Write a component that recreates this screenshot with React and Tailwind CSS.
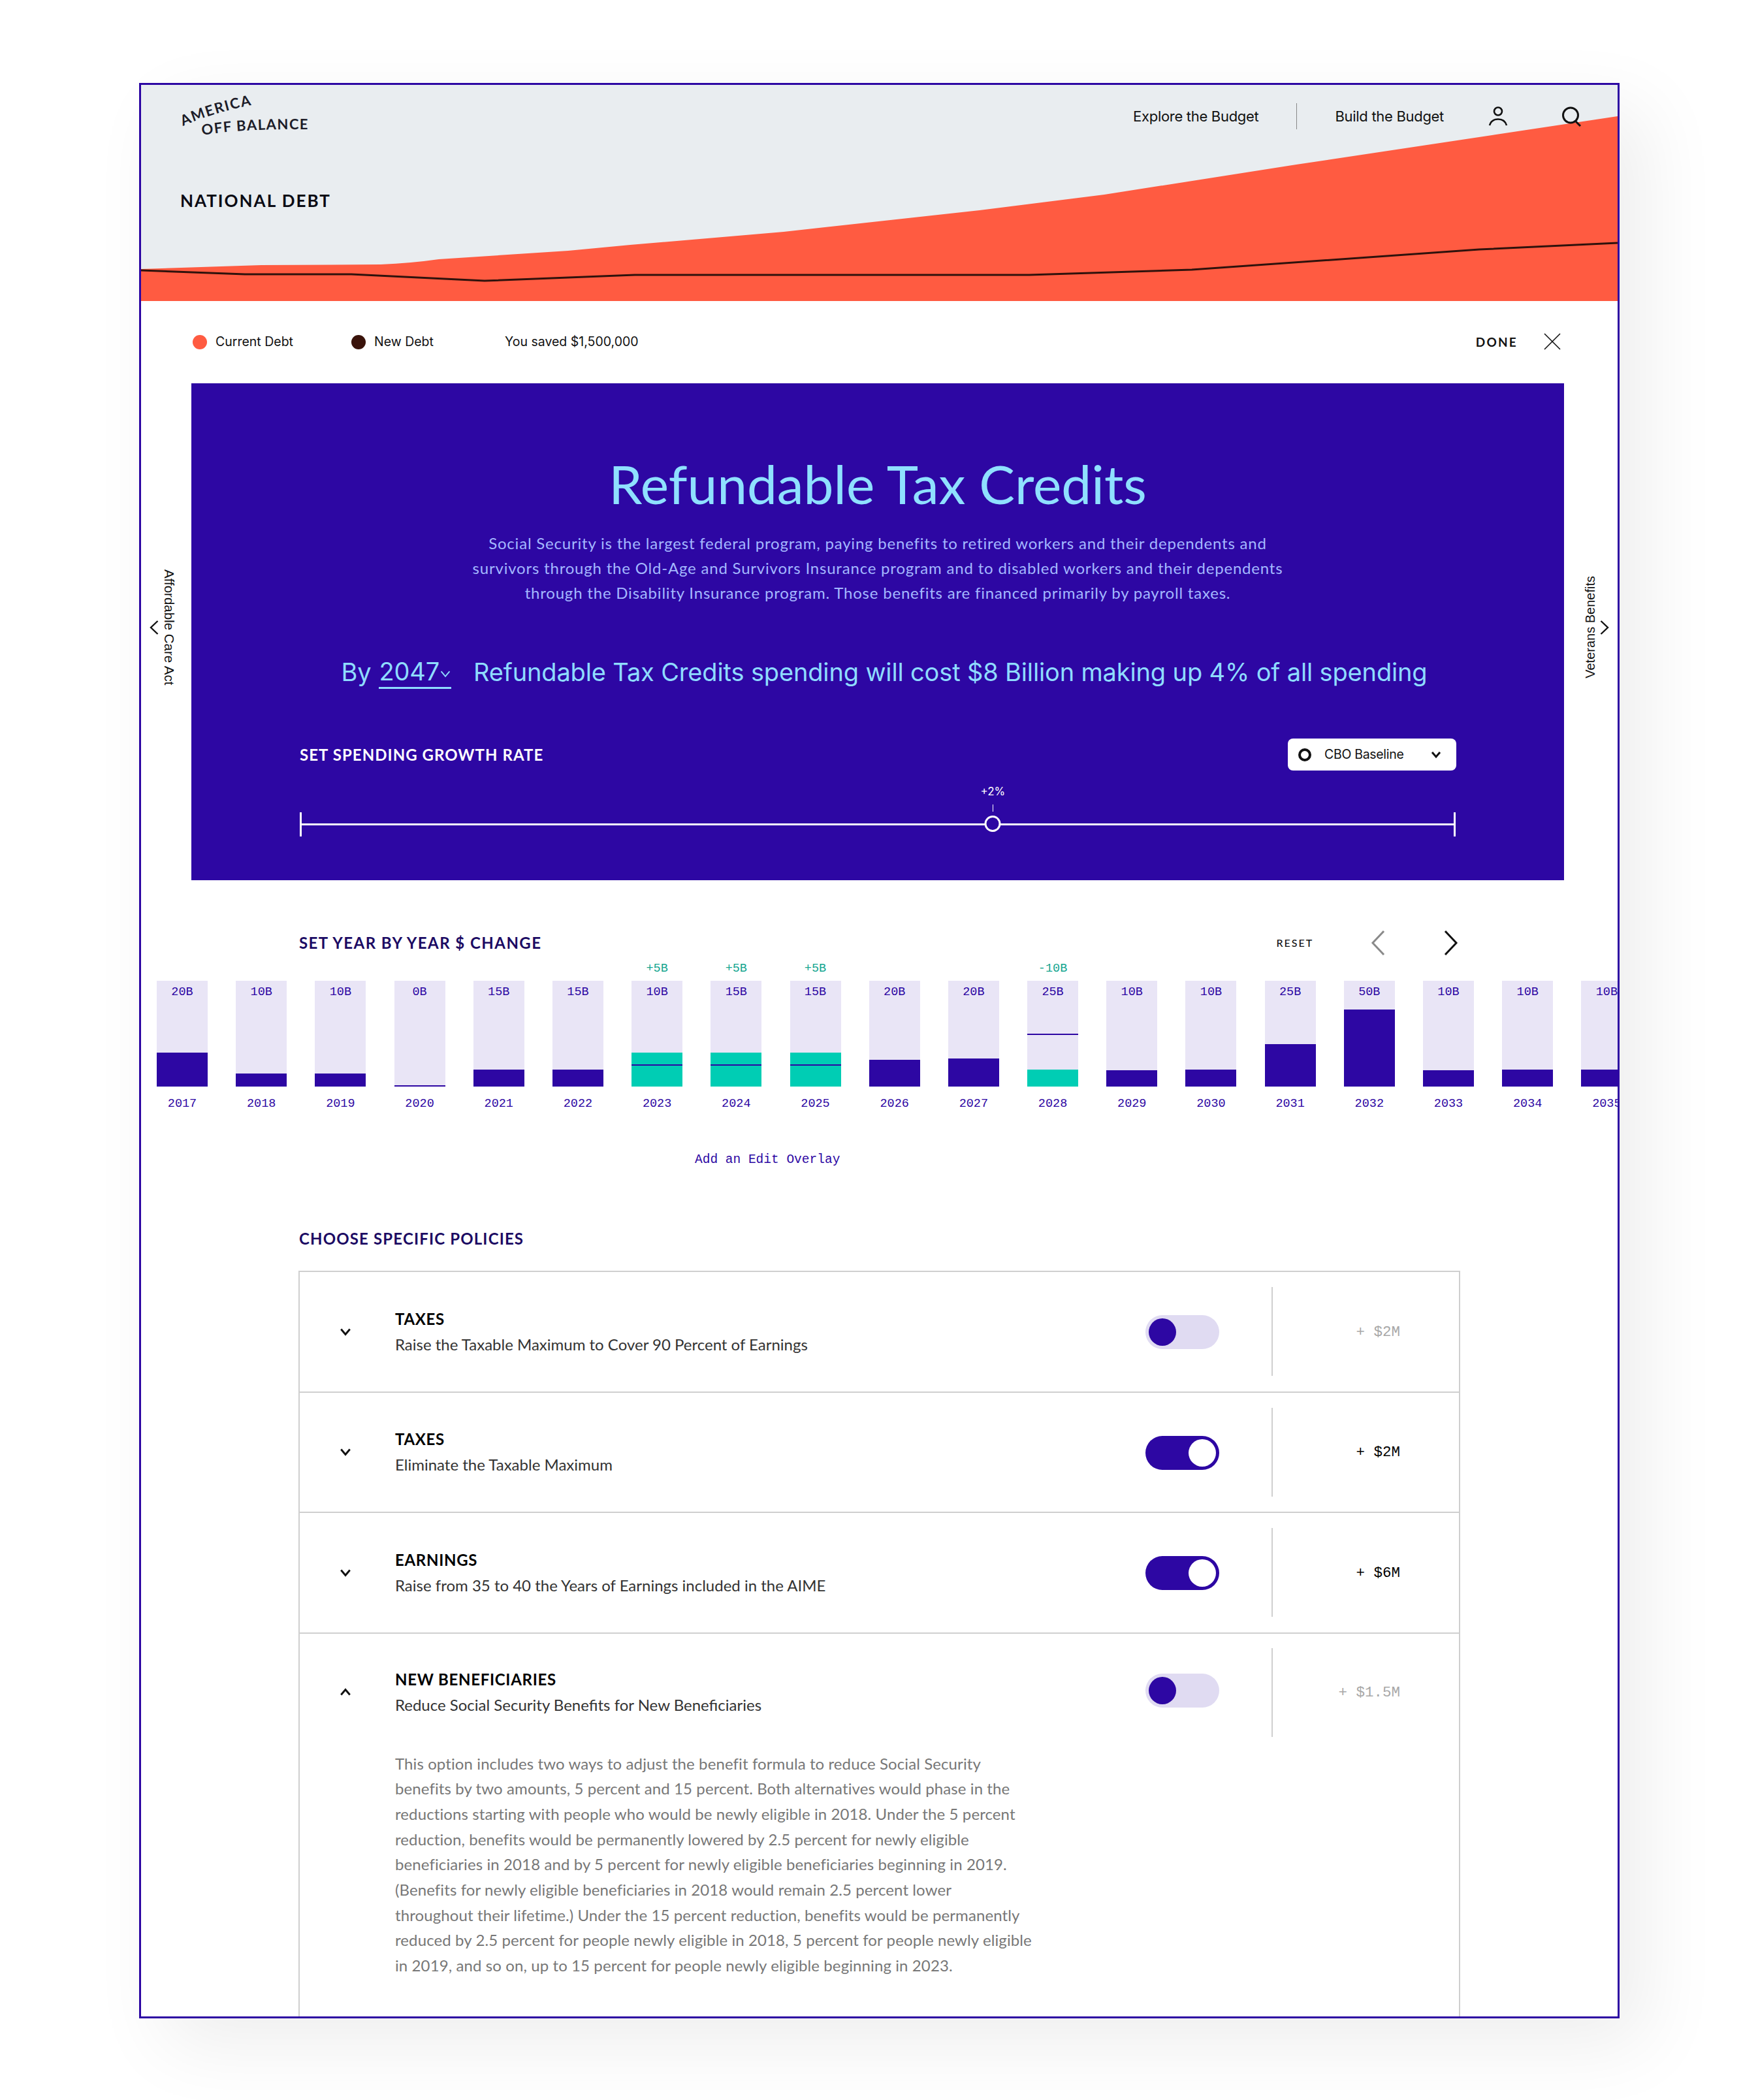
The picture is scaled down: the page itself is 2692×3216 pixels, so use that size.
import React from 'react';

const years = [
  { year: 2017, label: '20B', fill: 52 },
  { year: 2018, label: '10B', fill: 20 },
  { year: 2019, label: '10B', fill: 20 },
  { year: 2020, label: '0B', fill: 2 },
  { year: 2021, label: '15B', fill: 26 },
  { year: 2022, label: '15B', fill: 26 },
  { year: 2023, label: '10B', fill: 52, teal: true, line: 32, delta: '+5B' },
  { year: 2024, label: '15B', fill: 52, teal: true, line: 32, delta: '+5B' },
  { year: 2025, label: '15B', fill: 52, teal: true, line: 32, delta: '+5B' },
  { year: 2026, label: '20B', fill: 41 },
  { year: 2027, label: '20B', fill: 43 },
  { year: 2028, label: '25B', fill: 26, teal: true, line: 79, delta: '-10B' },
  { year: 2029, label: '10B', fill: 25 },
  { year: 2030, label: '10B', fill: 26 },
  { year: 2031, label: '25B', fill: 65 },
  { year: 2032, label: '50B', fill: 118 },
  { year: 2033, label: '10B', fill: 25 },
  { year: 2034, label: '10B', fill: 26 },
  { year: 2035, label: '10B', fill: 26 },
];

const policies = [
  { title: 'TAXES', text: 'Raise the Taxable Maximum to Cover 90 Percent of Earnings', on: false, amount: '+ $2M' },
  { title: 'TAXES', text: 'Eliminate the Taxable Maximum', on: true, amount: '+ $2M' },
  { title: 'EARNINGS', text: 'Raise from 35 to 40 the Years of Earnings included in the AIME', on: true, amount: '+ $6M' },
];

const details = [
  'This option includes two ways to adjust the benefit formula to reduce Social Security',
  'benefits by two amounts, 5 percent and 15 percent. Both alternatives would phase in the',
  'reductions starting with people who would be newly eligible in 2018. Under the 5 percent',
  'reduction, benefits would be permanently lowered by 2.5 percent for newly eligible',
  'beneficiaries in 2018 and by 5 percent for newly eligible beneficiaries beginning in 2019.',
  '(Benefits for newly eligible beneficiaries in 2018 would remain 2.5 percent lower',
  'throughout their lifetime.) Under the 15 percent reduction, benefits would be permanently',
  'reduced by 2.5 percent for people newly eligible in 2018, 5 percent for people newly eligible',
  'in 2019, and so on, up to 15 percent for people newly eligible beginning in 2023.',
];

function Chevron({ d = 'M2 3l6 7 6-7', className = '', width = 16, height = 13, strokeWidth = 2.6 }) {
  return (
    <svg width={width} height={height} viewBox="0 0 16 13" fill="none" className={className}>
      <path d={d} stroke="currentColor" strokeWidth={strokeWidth} />
    </svg>
  );
}

function Toggle({ on, className = '' }) {
  return (
    <div className={`flex h-[52px] w-[113px] shrink-0 items-center rounded-full px-[5px] ${on ? 'justify-end bg-[#2d07a3]' : 'justify-start bg-[#e0dbf2]'} ${className}`}>
      <div className={`h-[42px] w-[42px] rounded-full ${on ? 'bg-white' : 'bg-[#2d07a3]'}`} />
    </div>
  );
}

function PolicyRow({ title, text, on, amount, open, className = '' }) {
  return (
    <div className={`flex items-center ${className}`}>
      <div className="flex w-[146px] shrink-0 justify-center pr-[6px] text-[#111]">
        <Chevron d={open ? 'M2 10l6-7 6 7' : 'M2 3l6 7 6-7'} width={18} height={15} />
      </div>
      <div className="w-[1149px] shrink-0 font-['Lato',sans-serif]">
        <div className="text-[24px] leading-[32px] font-bold tracking-[0.7px] text-black">{title}</div>
        <div className="mt-[7px] text-[24px] leading-[32px] text-[#333]">{text}</div>
      </div>
      <Toggle on={on} className={open ? 'mb-[6px]' : 'mt-[2px]'} />
      <div className="ml-[80px] h-[136px] w-[2px] shrink-0 bg-[#cfcfcf]" />
      <div className={`mt-[3px] flex-1 pr-[90px] text-right font-['Liberation_Mono',monospace] text-[22.5px] ${on ? 'text-black' : 'text-[#a8a8a8]'}`}>{amount}</div>
    </div>
  );
}

export default function App() {
  return (
    <div className="h-[3216px] w-[2692px] overflow-hidden bg-white pt-[127px] pl-[213px]">
      <div className="h-[2964px] w-[2267px] overflow-hidden border-[3px] border-[#2d07a3] bg-white shadow-[40px_40px_110px_rgba(0,0,0,0.07)]">
        {/* debt chart header */}
        <div className="relative h-[331px] bg-[#e9edf0] pt-[12px] pl-[60px]">
          <svg className="absolute inset-0" width="2261" height="331" viewBox="216 130 2261 331">
            <path
              d="M216 412 L400 406 L583 405 Q630 403 672 397 L870 384 L965 375 L1200 355 L1500 322 L1691 298 L1985 252 L2477 178 L2477 461 L216 461 Z"
              fill="#ff5b41"
            />
            <path
              d="M216 414 L375 420 L538 420 L742 430 L972 421 L1576 421 L1825 413 L2265 382 L2477 372"
              fill="none"
              stroke="#2f120c"
              strokeWidth="3"
            />
          </svg>
          <div className="relative flex h-[72px] items-center pr-[55px]">
            <svg width="204" height="72" viewBox="-2 0 204 72" className="shrink-0 overflow-visible">
              <path id="logo-top" d="M2 51 Q52 29 112 18" fill="none" />
              <path id="logo-bottom" d="M32 65 Q90 55 198 56" fill="none" />
              <text fontFamily="Lato, sans-serif" fontSize="22" fontWeight="700" fill="#1c1c28">
                <textPath href="#logo-top" textLength="110">AMERICA</textPath>
              </text>
              <text fontFamily="Lato, sans-serif" fontSize="22" fontWeight="700" fill="#1c1c28">
                <textPath href="#logo-bottom" textLength="162">OFF BALANCE</textPath>
              </text>
            </svg>
            <div className="ml-auto flex items-center font-['Inter',sans-serif] text-[22px] tracking-[-0.3px] text-[#111]">
              <span>Explore the Budget</span>
              <div className="mx-[58px] h-[40px] w-px bg-[#888]" />
              <span>Build the Budget</span>
              <svg width="30" height="30" viewBox="0 0 30 30" fill="none" stroke="#111" strokeWidth="2.6" className="ml-[68px]">
                <circle cx="15" cy="7.5" r="6" />
                <path d="M2 29C4 22 9 19.5 15 19.5S26 22 28 29" />
              </svg>
              <svg width="31" height="31" viewBox="0 0 31 31" fill="none" stroke="#111" strokeWidth="3" className="ml-[82px]">
                <circle cx="14" cy="13.5" r="11.5" />
                <path d="M21 22l8 8" />
              </svg>
            </div>
          </div>
          <div className="relative mt-[78px] font-['Lato',sans-serif] text-[26px] leading-[30px] font-bold tracking-[2px] text-[#0b0b14]">NATIONAL DEBT</div>
        </div>

        {/* legend */}
        <div className="flex h-[126px] items-center pr-[87px] pl-[79px] font-['Inter',sans-serif] text-[19.5px] text-[#111]">
          <div className="h-[22px] w-[22px] rounded-full bg-[#ff5b41]" />
          <span className="ml-[13px] w-[208px]">Current Debt</span>
          <div className="h-[22px] w-[22px] rounded-full bg-[#3a130b]" />
          <span className="ml-[13px] w-[200px]">New Debt</span>
          <span>You saved $1,500,000</span>
          <span className="ml-auto font-['Lato',sans-serif] text-[19px] font-bold tracking-[2.2px]">DONE</span>
          <svg width="26" height="26" viewBox="0 0 26 26" fill="none" stroke="#111" strokeWidth="1.6" className="mb-[3px] ml-[40px]">
            <path d="M1 1l24 24M25 1L1 25" />
          </svg>
        </div>

        {/* hero with side rails */}
        <div className="flex items-stretch">
          <div className="flex w-[77px] shrink-0 items-center pb-[14px] pl-[13px] text-[#111]">
            <svg width="14" height="22" viewBox="0 0 14 22" fill="none" stroke="currentColor" strokeWidth="2.4" className="shrink-0">
              <path d="M12.5 1L2 11l10.5 10" />
            </svg>
            <span className="ml-[4px] font-['Liberation_Sans',sans-serif] text-[20.5px] leading-[24px] [writing-mode:vertical-rl]">Affordable Care Act</span>
          </div>
          <div className="h-[761px] w-[2102px] shrink-0 bg-[#2d07a3] px-[166px] pt-[108px]">
            <h1 className="text-center font-['Lato',sans-serif] text-[82px] leading-[90px] font-normal text-[#8fe0ff]">Refundable Tax Credits</h1>
            <p className="mt-[28px] text-center font-['Lato',sans-serif] text-[24px] leading-[38px] tracking-[0.8px] text-[#a4b8ff]">
              Social Security is the largest federal program, paying benefits to retired workers and their dependents and<br />
              survivors through the Old-Age and Survivors Insurance program and to disabled workers and their dependents<br />
              through the Disability Insurance program. Those benefits are financed primarily by payroll taxes.
            </p>
            <div className="mt-[74px] flex h-[56px] items-center justify-center pl-[20px] font-['Inter',sans-serif] text-[38px] tracking-[-0.15px] text-[#8fdcff]">
              <span>By</span>
              <span className="ml-[12px] flex items-center border-b-[3px] border-[#8fdcff] leading-[48px]">
                2047
                <Chevron className="mt-[8px]" width={18} height={14} strokeWidth={1.8} />
              </span>
              <span className="ml-[34px]">Refundable Tax Credits spending will cost $8 Billion making up 4% of all spending</span>
            </div>
            <div className="mt-[74px] flex h-[49px] items-center justify-between">
              <h2 className="font-['Lato',sans-serif] text-[24px] font-bold tracking-[1.05px] text-white">SET SPENDING GROWTH RATE</h2>
              <div className="mr-[-1px] flex h-[49px] w-[258px] items-center rounded-[8px] bg-white pr-[22px] pl-[16px] font-['Inter',sans-serif] text-[19.5px] tracking-[-0.3px] text-[#111]">
                <div className="h-[20px] w-[20px] rounded-full border-[4px] border-[#111]" />
                <span className="ml-[20px]">CBO Baseline</span>
                <Chevron className="ml-auto" width={18} height={13} strokeWidth={3} />
              </div>
            </div>
            <div className="relative mt-[64px] flex h-[37px] items-center border-x-[3px] border-white">
              <div className="h-[3px] w-full bg-white" />
              <div className="absolute top-[5px] left-[60%] h-[25px] w-[25px] -translate-x-1/2 rounded-full border-[3px] border-white bg-[#2d07a3]" />
              <div className="absolute top-[-12px] left-[60%] h-[11px] w-px bg-white" />
              <div className="absolute top-[-44px] left-[60%] -translate-x-1/2 font-['Inter',sans-serif] text-[17px] text-white">+2%</div>
            </div>
          </div>
          <div className="flex w-[82px] shrink-0 items-center justify-end pr-[13px] pb-[14px] text-[#111]">
            <span className="mr-[3px] rotate-180 font-['Liberation_Sans',sans-serif] text-[20px] leading-[24px] [writing-mode:vertical-rl]">Veterans Benefits</span>
            <svg width="14" height="22" viewBox="0 0 14 22" fill="none" stroke="currentColor" strokeWidth="2.4" className="shrink-0">
              <path d="M1.5 1L12 11 1.5 21" />
            </svg>
          </div>
        </div>

        {/* year by year bars */}
        <div className="mt-[76px] flex h-[40px] items-center pl-[242px]">
          <h2 className="font-['Lato',sans-serif] text-[24px] font-bold tracking-[1.45px] text-[#1b0a63]">SET YEAR BY YEAR $ CHANGE</h2>
          <span className="ml-[1125px] font-['Lato',sans-serif] text-[16px] font-medium tracking-[2px] text-[#111]">RESET</span>
          <svg width="22" height="38" viewBox="0 0 22 38" fill="none" stroke="#8a8a8a" strokeWidth="3" className="ml-[88px]">
            <path d="M20 1L3 19l17 18" />
          </svg>
          <svg width="22" height="38" viewBox="0 0 22 38" fill="none" stroke="#111" strokeWidth="3" className="ml-[90px]">
            <path d="M2 1l17 18L2 37" />
          </svg>
        </div>
        <div className="mt-[8px] ml-[24px] flex gap-[43.2px] font-['Liberation_Mono',monospace] text-[18.5px] leading-[24px] text-[#2d07a3]">
          {years.map((y) => (
            <div key={y.year} className="w-[78px] shrink-0">
              <div className="h-[24px] text-center text-[#13a58f]">{y.delta}</div>
              <div className="relative mt-[6px] flex h-[162px] flex-col justify-end bg-[#e9e5f6]">
                <div className="absolute top-[6px] w-full text-center">{y.label}</div>
                <div className={y.teal ? 'bg-[#00cdb4]' : 'bg-[#2d07a3]'} style={{ height: y.fill }} />
                {y.line && <div className="absolute h-[2px] w-full bg-[#2d07a3]" style={{ bottom: y.line }} />}
              </div>
              <div className="mt-[15px] text-center">{y.year}</div>
            </div>
          ))}
        </div>
        <div className="mt-[61px] ml-[848px] font-['Liberation_Mono',monospace] text-[19.5px] leading-[24px] text-[#2d07a3]">Add an Edit Overlay</div>

        {/* policies */}
        <h2 className="mt-[94px] ml-[242px] font-['Lato',sans-serif] text-[24px] leading-[30px] font-bold tracking-[1.15px] text-[#1b0a63]">CHOOSE SPECIFIC POLICIES</h2>
        <div className="mt-[34px] ml-[241px] w-[1779px] border-x-2 border-t-2 border-[#cfcfcf]">
          {policies.map((p, i) => (
            <PolicyRow key={i} {...p} className="h-[184.5px] border-b-2 border-[#cfcfcf]" />
          ))}
          <PolicyRow title="NEW BENEFICIARIES" text="Reduce Social Security Benefits for New Beneficiaries" on={false} amount="+ $1.5M" open className="h-[180px]" />
          <div className="ml-[146px] pb-[60px] font-['Lato',sans-serif] text-[24px] leading-[38.7px] tracking-[0.1px] text-[#777]">
            {details.map((line) => (
              <div key={line}>{line}</div>
            ))}
          </div>
        </div>
      </div>
    </div>
  );
}
